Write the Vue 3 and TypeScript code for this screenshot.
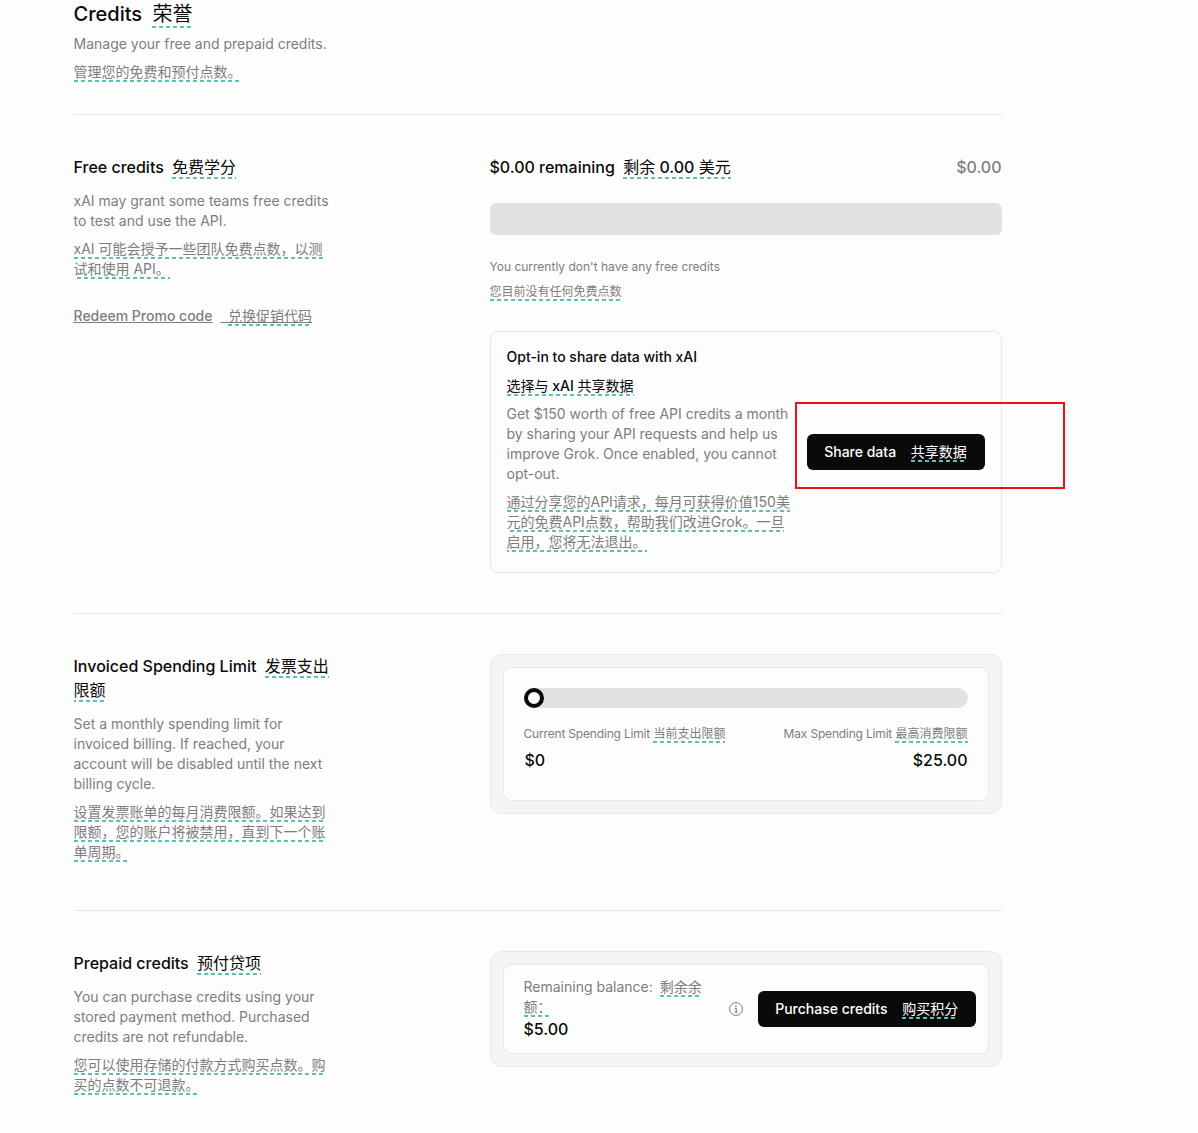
<script setup lang="ts">
const descFree = "xAI may grant some teams free credits to test and use the API.";
</script>

<template>
  <div class="page">
    <header class="head">
      <h1 class="head__title">Credits <span class="zh zh--title zh--head cjk">荣誉</span></h1>
      <p class="muted head__desc">Manage your free and prepaid credits.</p>
      <p class="muted head__zh"><span class="zh">管理您的免费和预付点数。</span></p>
    </header>

    <section class="row row--free">
      <div class="side">
        <h2 class="side__title">Free credits <span class="zh zh--title cjk">免费学分</span></h2>
        <p class="muted side__desc">{{ descFree }}</p>
        <p class="muted side__zh"><span class="zh">xAI 可能会授予一些团队免费点数，以测试和使用 API。</span></p>
        <a class="promo">Redeem Promo code<span class="promo__gap">&nbsp;&nbsp;</span><span class="zh cjk">兑换促销代码</span></a>
      </div>
      <div class="main">
        <div class="remain">
          <div class="remain__label">$0.00 remaining <span class="zh zh--title"><span class="cjk">剩余</span> 0.00 <span class="cjk">美元</span></span></div>
          <div class="remain__value">$0.00</div>
        </div>
        <div class="bar"></div>
        <p class="note">You currently don't have any free credits</p>
        <p class="note note--zh"><span class="zh">您目前没有任何免费点数</span></p>
        <div class="opt">
          <div class="opt__text">
            <h3 class="opt__title">Opt-in to share data with xAI</h3>
            <h3 class="opt__title opt__title--zh"><span class="zh"><span class="cjk">选择与</span> xAI <span class="cjk">共享数据</span></span></h3>
            <p class="muted opt__desc">Get $150 worth of free API credits a month by sharing your API requests and help us improve Grok. Once enabled, you cannot opt-out.</p>
            <p class="muted opt__zh"><span class="zh">通过分享您的API请求，每月可获得价值150美元的免费API点数，帮助我们改进Grok。一旦启用，您将无法退出。</span></p>
          </div>
          <button class="btn btn--share">Share data <span class="zh btn__zh cjk">共享数据</span></button>
          <div class="marker"></div>
        </div>
      </div>
    </section>

    <section class="row row--limit">
      <div class="side">
        <h2 class="side__title">Invoiced Spending Limit <span class="zh zh--title cjk">发票支出限额</span></h2>
        <p class="muted side__desc">Set a monthly spending limit for invoiced billing. If reached, your account will be disabled until the next billing cycle.</p>
        <p class="muted side__zh"><span class="zh">设置发票账单的每月消费限额。如果达到限额，您的账户将被禁用，直到下一个账单周期。</span></p>
      </div>
      <div class="main">
        <div class="tray">
          <div class="panel panel--limit">
            <div class="slider"><span class="slider__knob"></span></div>
            <div class="limits">
              <div class="limit">
                <div class="limit__label"><span class="limit__en">Current Spending Limit</span> <span class="zh">当前支出限额</span></div>
                <div class="limit__value limit__value--cur">$0</div>
              </div>
              <div class="limit limit--right">
                <div class="limit__label"><span class="limit__en">Max Spending Limit</span> <span class="zh">最高消费限额</span></div>
                <div class="limit__value">$25.00</div>
              </div>
            </div>
          </div>
        </div>
      </div>
    </section>

    <section class="row row--prepaid">
      <div class="side">
        <h2 class="side__title">Prepaid credits <span class="zh zh--title cjk">预付贷项</span></h2>
        <p class="muted side__desc">You can purchase credits using your stored payment method. Purchased credits are not refundable.</p>
        <p class="muted side__zh"><span class="zh">您可以使用存储的付款方式购买点数。购买的点数不可退款。</span></p>
      </div>
      <div class="main">
        <div class="tray">
          <div class="panel panel--balance">
            <div class="balance">
              <div class="balance__label">Remaining balance: <span class="zh balance__zh">剩余余额：</span></div>
              <div class="balance__value">$5.00</div>
            </div>
            <svg class="info" width="14" height="14" viewBox="0 0 14 14" fill="none" stroke="#7d7d7d">
              <circle cx="7" cy="7" r="6.4" />
              <path d="M5.8 6.2H7.2V10.2M5.6 10.3H8.6" stroke-width="1.1" />
              <path d="M6.9 3.6V4.8" stroke-width="1.4" />
            </svg>
            <button class="btn btn--buy">Purchase credits <span class="zh btn__zh cjk">购买积分</span></button>
          </div>
        </div>
      </div>
    </section>
  </div>
</template>

<style>
html,
body {
  background: #fdfdfd;
}
</style>

<style scoped>
* {
  box-sizing: border-box;
}
.page {
  width: 928px;
  margin-left: 73.5px;
  font-family: Inter, "Noto Sans CJK SC", sans-serif;
  font-size: 14px;
  line-height: 20px;
  color: #0a0a0a;
}
h1,
h2,
h3,
p {
  margin: 0;
  font-weight: 400;
  font-size: 14px;
}
.zh {
  padding-bottom: 2px;
  background-image: linear-gradient(to right, #5bc0bb 60%, transparent 60%);
  background-size: 7px 2px;
  background-repeat: repeat-x;
  background-position: 0 100%;
}
.cjk {
  font-weight: 400;
}
.zh--title {
  margin-left: 4px;
}
.zh--head {
  margin-left: 5px;
}
.muted {
  color: #7d7d7d;
}
.head {
  height: 115px;
  border-bottom: 1px solid #e8e8e8;
}
.head__title {
  font-size: 20px;
  line-height: 28px;
  font-weight: 500;
}
.head__desc {
  margin-top: 6px;
}
.head__zh {
  margin-top: 8px;
}
.row {
  display: grid;
  grid-template-columns: 256px 512px;
  column-gap: 160px;
  align-items: start;
  border-bottom: 1px solid #e8e8e8;
  padding-top: 40px;
}
.row--free {
  height: 499px;
}
.row--limit {
  height: 297px;
}
.row--prepaid {
  border-bottom: none;
  padding-bottom: 30px;
}
.side__title {
  font-size: 16px;
  line-height: 24px;
  font-weight: 500;
}
.side__desc {
  margin-top: 12px;
}
.side__zh {
  margin-top: 8px;
}
.promo {
  display: block;
  margin-top: 27px;
  color: #7d7d7d;
  font-weight: 500;
  text-decoration: underline;
  text-decoration-skip-ink: none;
}
.promo__gap {
  display: inline;
  margin-left: 8px;
}
.remain {
  display: flex;
  justify-content: space-between;
  font-size: 16px;
  line-height: 24px;
  font-weight: 500;
}
.remain__value {
  color: #7d7d7d;
}
.bar {
  height: 32px;
  margin-top: 24px;
  border-radius: 6px;
  background: #e2e2e2;
}
.note {
  margin-top: 22px;
  font-size: 12px;
  line-height: 20px;
  color: #7d7d7d;
}
.note--zh {
  margin-top: 5px;
}
.opt {
  position: relative;
  display: flex;
  align-items: center;
  gap: 16px;
  margin-top: 29px;
  padding: 15px 16px;
  border: 1px solid #e8e8e8;
  border-radius: 8px;
}
.opt__text {
  width: 284px;
  flex: none;
  margin-bottom: 5px;
}
.opt__title {
  font-weight: 500;
  line-height: 20px;
}
.opt__title--zh {
  margin-top: 9px;
}
.opt__desc {
  margin-top: 8px;
}
.opt__zh {
  margin-top: 8px;
}
.btn {
  border: none;
  border-radius: 6px;
  background: #0a0a0a;
  color: #fff;
  font: 500 14px/20px Inter, "Noto Sans CJK SC", sans-serif;
  white-space: nowrap;
  height: 36px;
  padding: 0 17px;
}
.btn__zh {
  margin-left: 11px;
}
.btn--share {
  width: 178px;
}
.marker {
  position: absolute;
  left: 304px;
  top: 70px;
  width: 270px;
  height: 87px;
  border: 2px solid #f01010;
  pointer-events: none;
}
.tray {
  padding: 12px;
  border: 1px solid #e8e8e8;
  border-radius: 12px;
  background: #f5f5f5;
}
.panel {
  border: 1px solid #e8e8e8;
  border-radius: 8px;
  background: #fdfdfd;
}
.panel--limit {
  height: 134px;
  padding: 20px;
}
.slider {
  position: relative;
  height: 20px;
  border-radius: 10px;
  background: #e2e2e2;
}
.slider__knob {
  position: absolute;
  left: 0;
  top: 0;
  width: 20px;
  height: 20px;
  border: 4px solid #0a0a0a;
  border-radius: 50%;
  background: #fff;
}
.limits {
  display: flex;
  justify-content: space-between;
  margin-top: 16px;
}
.limit--right {
  text-align: right;
}
.limit__label {
  font-size: 12px;
  line-height: 20px;
  color: #7d7d7d;
}
.limit__en {
  letter-spacing: -0.18px;
}
.limit__value {
  margin-top: 4px;
  font-size: 16px;
  line-height: 24px;
  font-weight: 500;
}
.limit__value--cur {
  margin-left: 1px;
}
.panel--balance {
  display: flex;
  align-items: center;
  height: 90px;
  padding: 0 12px 0 20px;
}
.balance {
  width: 190px;
  flex: none;
}
.balance__label {
  color: #7d7d7d;
}
.balance__zh {
  margin-left: 3px;
}
.balance__value {
  font-size: 16px;
  line-height: 24px;
  font-weight: 500;
}
.info {
  margin-left: 15px;
  flex: none;
}
.btn--buy {
  margin-left: 15px;
  padding: 0 17px 0 17.5px;
  width: 218px;
}
</style>
